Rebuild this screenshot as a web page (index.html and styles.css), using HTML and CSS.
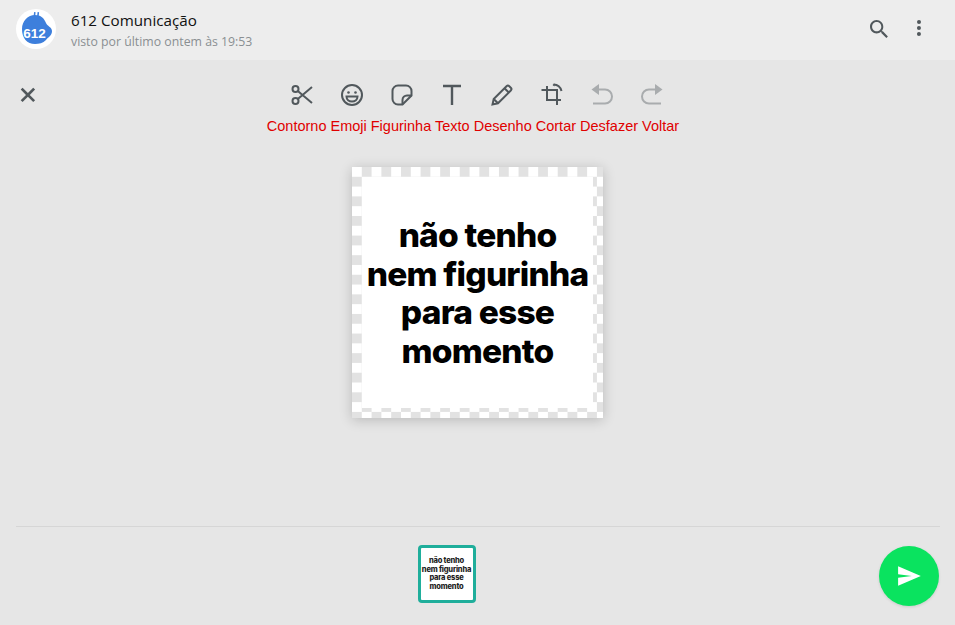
FILE: index.html
```html
<!DOCTYPE html>
<html lang="pt-BR">
<head>
    <meta charset="UTF-8">
    <title>612 Comunicação</title>
    <link rel="stylesheet" href="styles.css">
</head>
<body>
    <div class="app">
        <!-- Chat header -->
        <header class="chat-header">
            <div class="avatar">
                <svg viewBox="0 0 40 40" width="40" height="40">
                    <circle cx="20" cy="20" r="20" fill="#fff"/>
                    <path d="M17.500 8l.6-5 1.500.2-.5 4.800zM21 8l.6-5 1.500.2-.5 4.800z" fill="#3d7fdc"/>
                    <path d="M6 20C6 12 12 6 19 6c6 0 9 3 11 8 1 3 6 4 6 8 0 5-4 6-6 9-3 3-7 4-11 4-8 0-13-6-13-15z" fill="#3d7fdc"/>
                    <text x="18.500" y="29" class="avatar-text">612</text>
                </svg>
            </div>
            <div class="chat-info">
                <div class="chat-name">612 Comunicação</div>
                <div class="chat-status">visto por último ontem às 19:53</div>
            </div>
            <div class="chat-actions">
                <svg viewBox="0 0 24 24" width="24" height="24"><path fill="#51585c" d="M15.900 14.300H15l-.3-.3c1-1.100 1.600-2.700 1.600-4.300 0-3.700-3-6.700-6.700-6.700S3 6 3 9.700s3 6.700 6.700 6.700c1.600 0 3.100-.6 4.300-1.600l.3.3v.8l5.100 5.100 1.500-1.500-5-5.200zm-6.200 0c-2.600 0-4.600-2.100-4.600-4.600s2.100-4.600 4.600-4.600 4.600 2.100 4.600 4.600-2 4.600-4.600 4.600z"/></svg>
                <svg viewBox="0 0 24 24" width="24" height="24"><path fill="#51585c" d="M12 7a2 2 0 1 0-.001-4.001A2 2 0 0 0 12 7zm0 2a2 2 0 1 0-.001 3.999A2 2 0 0 0 12 9zm0 6a2 2 0 1 0-.001 3.999A2 2 0 0 0 12 15z"/></svg>
            </div>
        </header>

        <!-- Editor tools -->
        <section class="toolbar">
            <button class="close-btn">
                <svg viewBox="0 0 24 24" width="24" height="24"><path fill="#51585c" d="M19.100 17.200l-5.300-5.300 5.300-5.300-1.900-1.900-5.300 5.300-5.300-5.300-1.900 1.900 5.300 5.300-5.300 5.300 1.900 1.900 5.300-5.300 5.300 5.300 1.900-1.900z"/></svg>
            </button>
            <div class="tools">
                <div class="tool-icons">
                    <svg viewBox="0 0 24 24" class="icon"><circle cx="5.500" cy="6" r="3" /><circle cx="5.500" cy="18" r="3"/><path d="M7.800 8L22 20M7.800 16L22 4"/></svg>
                    <svg viewBox="0 0 24 24" class="icon"><circle cx="12" cy="12" r="10"/><circle cx="8.500" cy="9.500" r="1.300" class="solid"/><circle cx="15.500" cy="9.500" r="1.300" class="solid"/><path d="M6.500 13.500h11c0 3-2.500 5-5.500 5s-5.500-2-5.500-5z"/></svg>
                    <svg viewBox="0 0 24 24" class="icon"><path d="M8 2.500h8a5.500 5.500 0 0 1 5.500 5.500v4.500L12.500 21.500H8A5.500 5.500 0 0 1 2.500 16V8A5.500 5.500 0 0 1 8 2.500z"/><path d="M21.500 12.500h-4.500a4.500 4.500 0 0 0-4.500 4.500v4.500"/></svg>
                    <svg viewBox="0 0 24 24" class="icon icon-thick"><path d="M3 3h18M12 3v19"/></svg>
                    <svg viewBox="0 0 24 24" class="icon"><path d="M2.500 21.500l1.200-5.500L16.500 3.200a2 2 0 0 1 2.800 0l1.500 1.500a2 2 0 0 1 0 2.800L8 20.300z"/><path d="M14.500 5.200l4.300 4.300M3.700 16l4.300 4.300"/></svg>
                    <svg viewBox="0 0 24 24" class="icon"><path d="M7 3v14h14M1.500 7H17v15"/><path d="M13.500 1.500c4 .2 7 2.500 8 6.500"/><path d="M14.500 .5v3l-2-1.500z" class="solid"/></svg>
                    <svg viewBox="0 0 24 24" class="icon icon-off"><path d="M6 6.500h9a7 7 0 0 1 0 14H3"/><path d="M9 1L1.500 6.500 9 12z" class="solid"/></svg>
                    <svg viewBox="0 0 24 24" class="icon icon-off"><path d="M18 6.500H9a7 7 0 0 0 0 14h12"/><path d="M15 1l7.500 5.500L15 12z" class="solid"/></svg>
                </div>
                <div class="tool-labels">Contorno Emoji Figurinha Texto Desenho Cortar Desfazer Voltar</div>
            </div>
        </section>

        <!-- Sticker preview -->
        <main class="stage">
            <div class="sticker">
                <div class="sticker-inner">
                    <p class="sticker-text">não tenho<br>nem figurinha<br>para esse<br>momento</p>
                </div>
            </div>
        </main>

        <footer class="bottom-bar">
            <div class="thumbs">
                <div class="thumb">
                    <p class="thumb-text">não tenho<br>nem figurinha<br>para esse<br>momento</p>
                </div>
            </div>
            <button class="send-btn">
                <svg viewBox="0 0 24 24" width="24" height="24"><path fill="#fff" d="M1.101 21.757 23.800 12.028 1.101 2.300l.011 7.912 13.623 1.816-13.623 1.817-.011 7.912z"/></svg>
            </button>
        </footer>
    </div>
</body>
</html>
```

FILE: styles.css
```css
* {
    box-sizing: border-box;
}
body {
    margin: 0;
    font-family: "Open Sans", "Noto Sans", sans-serif;
    background-color: #e6e6e6;
    overflow: hidden;
}
button {
    border: 0;
    padding: 0;
    background: none;
}
p {
    margin: 0;
}
.app {
    display: flex;
    flex-direction: column;
    height: 625px;
}
.chat-header {
    display: flex;
    align-items: center;
    height: 60px;
    padding: 0 24px 2px 16px;
    background-color: #ededed;
}
.avatar {
    width: 40px;
    height: 40px;
    margin-right: 15px;
}
.avatar-text {
    font-family: "Liberation Sans", sans-serif;
    font-size: 13.5px;
    font-weight: bold;
    fill: #fff;
    text-anchor: middle;
}
.chat-info {
    flex: 1;
    padding-top: 3px;
}
.chat-name {
    font-size: 15.2px;
    line-height: 20px;
    color: #111;
}
.chat-status {
    margin-top: 3px;
    font-size: 12.3px;
    line-height: 18px;
    color: #8a8f92;
}
.chat-actions {
    display: flex;
    gap: 16px;
}
.toolbar {
    display: grid;
    grid-template-columns: 1fr auto 1fr;
    height: 107px;
    padding: 23px 16px 0;
}
.close-btn {
    justify-self: start;
    align-self: start;
    height: 24px;
}
.tool-icons {
    display: flex;
    justify-content: center;
    gap: 26px;
}
.icon {
    width: 24px;
    height: 24px;
    fill: none;
    stroke: #51585c;
    stroke-width: 2;
}
.icon-thick {
    stroke-width: 2.4;
}
.icon-off {
    stroke: #a9acae;
}
.icon .solid {
    fill: #51585c;
    stroke: none;
}
.icon-off .solid {
    fill: #a9acae;
}
.tool-labels {
    margin: 11px 9px 0 0;
    font-family: "Liberation Sans", sans-serif;
    font-size: 14.5px;
    line-height: 16px;
    color: #e00000;
    text-align: center;
    white-space: nowrap;
}
.stage {
    display: flex;
    justify-content: center;
    height: 359px;
}
.sticker {
    width: 251px;
    height: 251px;
    padding: 10px;
    background-color: #fff;
    background-image: conic-gradient(#e2e2e2 25%, #fff 0 50%, #e2e2e2 0 75%, #fff 0);
    background-size: 19.6px 19.6px;
    box-shadow: 0 2px 12px rgba(0, 0, 0, 0.2);
}
.sticker-inner {
    display: flex;
    align-items: center;
    justify-content: center;
    height: 100%;
    padding-top: 1px;
    background-color: #fff;
}
.sticker-text {
    font-family: Inter, "Liberation Sans", sans-serif;
    font-size: 33.5px;
    font-weight: 800;
    line-height: 38.5px;
    letter-spacing: -0.8px;
    color: #000;
    text-align: center;
    white-space: nowrap;
}
.bottom-bar {
    display: flex;
    flex: 1;
    margin: 0 15px 0 16px;
    padding-top: 18px;
    border-top: 1px solid #d6d6d6;
}
.thumbs {
    flex: 1;
    display: flex;
    justify-content: center;
    align-items: flex-start;
    margin-right: 2px;
}
.thumb {
    display: flex;
    align-items: center;
    justify-content: center;
    width: 58px;
    height: 58px;
    background-color: #fff;
    border: 3px solid #1fae9b;
    border-radius: 4px;
}
.thumb-text {
    font-family: Inter, "Liberation Sans", sans-serif;
    font-size: 7.5px;
    font-weight: 800;
    line-height: 8.5px;
    letter-spacing: -0.2px;
    color: #222;
    text-align: center;
    white-space: nowrap;
}
.send-btn {
    display: flex;
    align-items: center;
    justify-content: center;
    width: 60px;
    height: 60px;
    margin: 1px 1px 0 0;
    background-color: #0ae35f;
    border-radius: 50%;
    box-shadow: 0 1px 3px rgba(0, 0, 0, 0.12);
}
```
